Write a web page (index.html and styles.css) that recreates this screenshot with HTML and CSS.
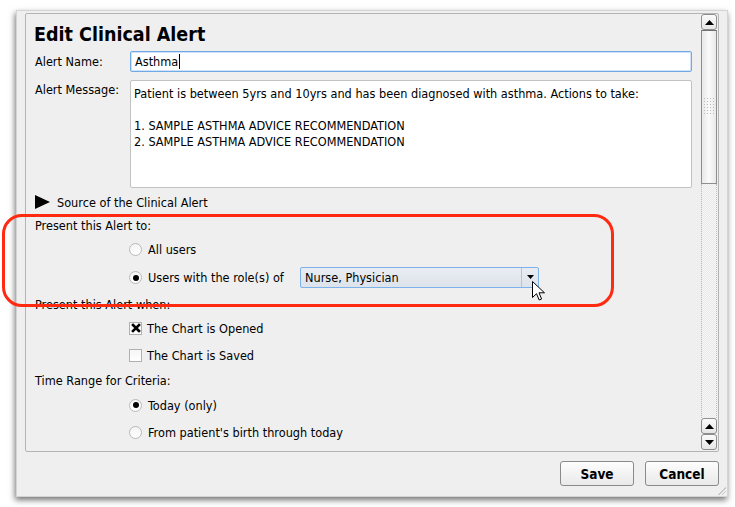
FILE: index.html
```html
<!DOCTYPE html>
<html>
<head>
<meta charset="utf-8">
<link rel="stylesheet" href="styles.css">
</head>
<body>
<div class="window">
  <div class="panel">
    <div class="content">
      <h1 class="title">Edit Clinical Alert</h1>
      <div class="form">
        <label class="lbl">Alert Name:</label>
        <div class="input">Asthma<span class="caret"></span></div>
        <label class="lbl lbl-top">Alert Message:</label>
        <div class="textarea">Patient is between 5yrs and 10yrs and has been diagnosed with asthma. Actions to take:<br><br>1. SAMPLE ASTHMA ADVICE RECOMMENDATION<br>2. SAMPLE ASTHMA ADVICE RECOMMENDATION</div>
      </div>
      <div class="row r-source"><span class="tri"></span>Source of the Clinical Alert</div>
      <div class="row r-g3">Present this Alert to:</div>
      <div class="row opt r-g4"><span class="radio"></span>All users</div>
      <div class="row opt r-role"><span class="radio on"></span><span class="role-label">Users with the role(s) of</span>
        <div class="combo"><span class="combo-text">Nurse, Physician</span><span class="combo-btn"><svg width="9" height="5" viewBox="0 0 9 5"><path d="M1 0h7L4.5 4z" fill="#000"/></svg></span></div>
      </div>
      <div class="row r-g6">Present this Alert when:</div>
      <div class="row opt r-g4"><span class="check on"><svg width="10" height="10" viewBox="0 0 10 10"><path d="M2 2L8 8M8 2L2 8" stroke="#000" stroke-width="2.6" stroke-linecap="square"/></svg></span>The Chart is Opened</div>
      <div class="row opt r-g7"><span class="check"></span>The Chart is Saved</div>
      <div class="row r-g5">Time Range for Criteria:</div>
      <div class="row opt r-g5"><span class="radio on"></span>Today (only)</div>
      <div class="row opt r-g7"><span class="radio"></span>From patient's birth through today</div>
    </div>
    <div class="vscroll">
      <div class="sbtn"><svg width="9" height="5" viewBox="0 0 9 5"><path d="M4.5 0L9 5H0z" fill="#000"/></svg></div>
      <div class="thumb"><svg width="11" height="18" viewBox="0 0 11 18"><g fill="#bbb"><rect x="0" y="0" width="1" height="1"/><rect x="3" y="0" width="1" height="1"/><rect x="6" y="0" width="1" height="1"/><rect x="9" y="0" width="1" height="1"/><rect x="0" y="3" width="1" height="1"/><rect x="3" y="3" width="1" height="1"/><rect x="6" y="3" width="1" height="1"/><rect x="9" y="3" width="1" height="1"/><rect x="0" y="6" width="1" height="1"/><rect x="3" y="6" width="1" height="1"/><rect x="6" y="6" width="1" height="1"/><rect x="9" y="6" width="1" height="1"/><rect x="0" y="9" width="1" height="1"/><rect x="3" y="9" width="1" height="1"/><rect x="6" y="9" width="1" height="1"/><rect x="9" y="9" width="1" height="1"/><rect x="0" y="12" width="1" height="1"/><rect x="3" y="12" width="1" height="1"/><rect x="6" y="12" width="1" height="1"/><rect x="9" y="12" width="1" height="1"/><rect x="0" y="15" width="1" height="1"/><rect x="3" y="15" width="1" height="1"/><rect x="6" y="15" width="1" height="1"/><rect x="9" y="15" width="1" height="1"/></g></svg></div>
      <div class="track"></div>
      <div class="sbtn"><svg width="9" height="5" viewBox="0 0 9 5"><path d="M4.5 0L9 5H0z" fill="#000"/></svg></div>
      <div class="sbtn"><svg width="9" height="5" viewBox="0 0 9 5"><path d="M0 0h9L4.5 5z" fill="#000"/></svg></div>
    </div>
  </div>
  <div class="footer">
    <button class="btn">Save</button>
    <button class="btn">Cancel</button>
  </div>
  <div class="grip"></div>
</div>
<div class="highlight"></div>
<svg class="cursor" width="14" height="21" viewBox="0 0 14 21"><path d="M0.5 0.5V16.5L4.5 12.7L7.2 19L9.6 18L7 11.8H12.5Z" fill="#fff" stroke="#000" stroke-width="1" stroke-linejoin="round"/></svg>
</body>
</html>
```

FILE: styles.css
```css
html, body {
  margin: 0;
  padding: 0;
  background: #ffffff;
}
body {
  font-family: "DejaVu Sans Condensed", "DejaVu Sans", sans-serif;
  font-stretch: condensed;
  font-size: 12.6px;
  color: #000;
  position: relative;
  width: 735px;
  height: 507px;
  overflow: hidden;
}
.window {
  margin: 10px 0 0 16px;
  width: 710px;
  height: 485px;
  background: #efefef;
  border: 1px solid #d4d4d4;
  box-shadow: -1px 3px 6px rgba(0,0,0,0.55);
  display: flex;
  flex-direction: column;
  position: relative;
}
.panel {
  margin: 2px 8px 0 8px;
  height: 437px;
  border: 1px solid #b4b4b4;
  border-radius: 2px;
  display: flex;
  background: #efefef;
}
.content {
  flex: 1;
  padding: 0 9px 0 9px;
  display: flex;
  flex-direction: column;
}
.title {
  margin: 8px 0 0 -1px;
  font-size: 19.5px;
  line-height: 26px;
  height: 26px;
  font-weight: bold;
}
.form {
  margin-top: 3px;
  display: grid;
  grid-template-columns: 95px 1fr;
  row-gap: 8px;
}
.lbl {
  display: flex;
  align-items: center;
  height: 21px;
}
.lbl-top {
  height: 16px;
  padding-top: 1px;
}
.input {
  height: 19px;
  border: 1px solid #6fa9e6;
  border-radius: 2px;
  background: #fff;
  padding: 0 4px;
  line-height: 19px;
  box-shadow: inset 0 0 0 1px #cfe2f7;
}
.caret {
  display: inline-block;
  width: 1px;
  height: 15px;
  background: #000;
  vertical-align: -3px;
  margin-left: 1px;
}
.textarea {
  height: 97px;
  border: 1px solid #c2c2c2;
  border-radius: 2px;
  background: #fff;
  padding: 5px 4px 4px 3px;
  line-height: 16px;
}
.row {
  height: 20px;
  display: flex;
  align-items: center;
}
.r-source { margin-top: 4px; }
.r-g3 { margin-top: 3px; }
.r-g4 { margin-top: 4px; }
.r-g5 { margin-top: 5px; }
.r-g6 { margin-top: 6px; }
.r-g7 { margin-top: 7px; }
.r-role { margin-top: 8px; height: 21px; }
.opt {
  padding-left: 94px;
}
.tri {
  width: 0;
  height: 0;
  border-top: 7px solid transparent;
  border-bottom: 7px solid transparent;
  border-left: 15px solid #000;
  margin-right: 7px;
}
.radio {
  width: 11px;
  height: 11px;
  border: 1px solid #b9b9b9;
  border-radius: 50%;
  background: linear-gradient(#f4f4f4, #ffffff);
  margin-right: 6px;
  display: flex;
  align-items: center;
  justify-content: center;
  box-sizing: content-box;
}
.radio.on::after {
  content: "";
  width: 6px;
  height: 6px;
  border-radius: 50%;
  background: #000;
}
.check {
  width: 11px;
  height: 11px;
  border: 1px solid #b0b0b0;
  background: linear-gradient(#f6f6f6, #ffffff);
  margin-right: 5px;
  display: flex;
  align-items: center;
  justify-content: center;
}
.role-label {
  width: 152px;
}
.combo {
  width: 237px;
  height: 19px;
  border: 1px solid #7db2ea;
  border-radius: 2px;
  background: linear-gradient(#e9edf3, #dde3eb);
  display: flex;
  align-items: center;
}
.combo-text {
  flex: 1;
  padding-left: 4px;
}
.combo-btn {
  width: 16px;
  height: 19px;
  border-left: 1px solid #b8c4d2;
  display: flex;
  align-items: center;
  justify-content: center;
}
.vscroll {
  width: 16px;
  margin: 0 1px 1px 0;
  display: flex;
  flex-direction: column;
}
.sbtn {
  height: 14px;
  border: 1px solid #8e8e8e;
  border-radius: 3px;
  background: linear-gradient(#fbfbfb, #e6e6e6);
  display: flex;
  align-items: center;
  justify-content: center;
  box-sizing: content-box;
  width: 14px;
}
.thumb {
  height: 152px;
  width: 14px;
  border: 1px solid #8e8e8e;
  border-top-color: #707070;
  background: linear-gradient(90deg, #e8e8e8, #fafafa 50%, #e8e8e8);
  display: flex;
  align-items: center;
  justify-content: center;
}
.track {
  flex: 1;
  width: 14px;
  border-left: 1px dotted #bdbdbd;
  border-right: 1px dotted #bdbdbd;
  background-color: #f6f6f6;
  background-image: repeating-conic-gradient(#e9e9e9 0 25%, #f7f7f7 0 50%);
  background-size: 2px 2px;
}
.footer {
  display: flex;
  justify-content: flex-end;
  gap: 11px;
  padding: 9px 8px 0 0;
}
.btn {
  width: 74px;
  height: 25px;
  font-family: "DejaVu Sans Condensed", "DejaVu Sans", sans-serif;
  font-stretch: condensed;
  font-size: 13.5px;
  font-weight: bold;
  color: #000;
  border: 1px solid #8a8a8a;
  border-radius: 3px;
  background: linear-gradient(#fdfdfd, #e9e9e9);
  padding: 0;
}
.grip {
  position: absolute;
  right: 1px;
  bottom: 1px;
  width: 9px;
  height: 9px;
  background: linear-gradient(135deg, transparent 0 55%, #c8c8c8 55% 62%, transparent 62% 75%, #c8c8c8 75% 82%, transparent 82%);
}
.highlight {
  position: absolute;
  left: 2px;
  top: 214px;
  width: 606px;
  height: 87px;
  border: 3px solid #ff2a10;
  border-radius: 20px;
}
.cursor {
  position: absolute;
  left: 532px;
  top: 281px;
}
```
